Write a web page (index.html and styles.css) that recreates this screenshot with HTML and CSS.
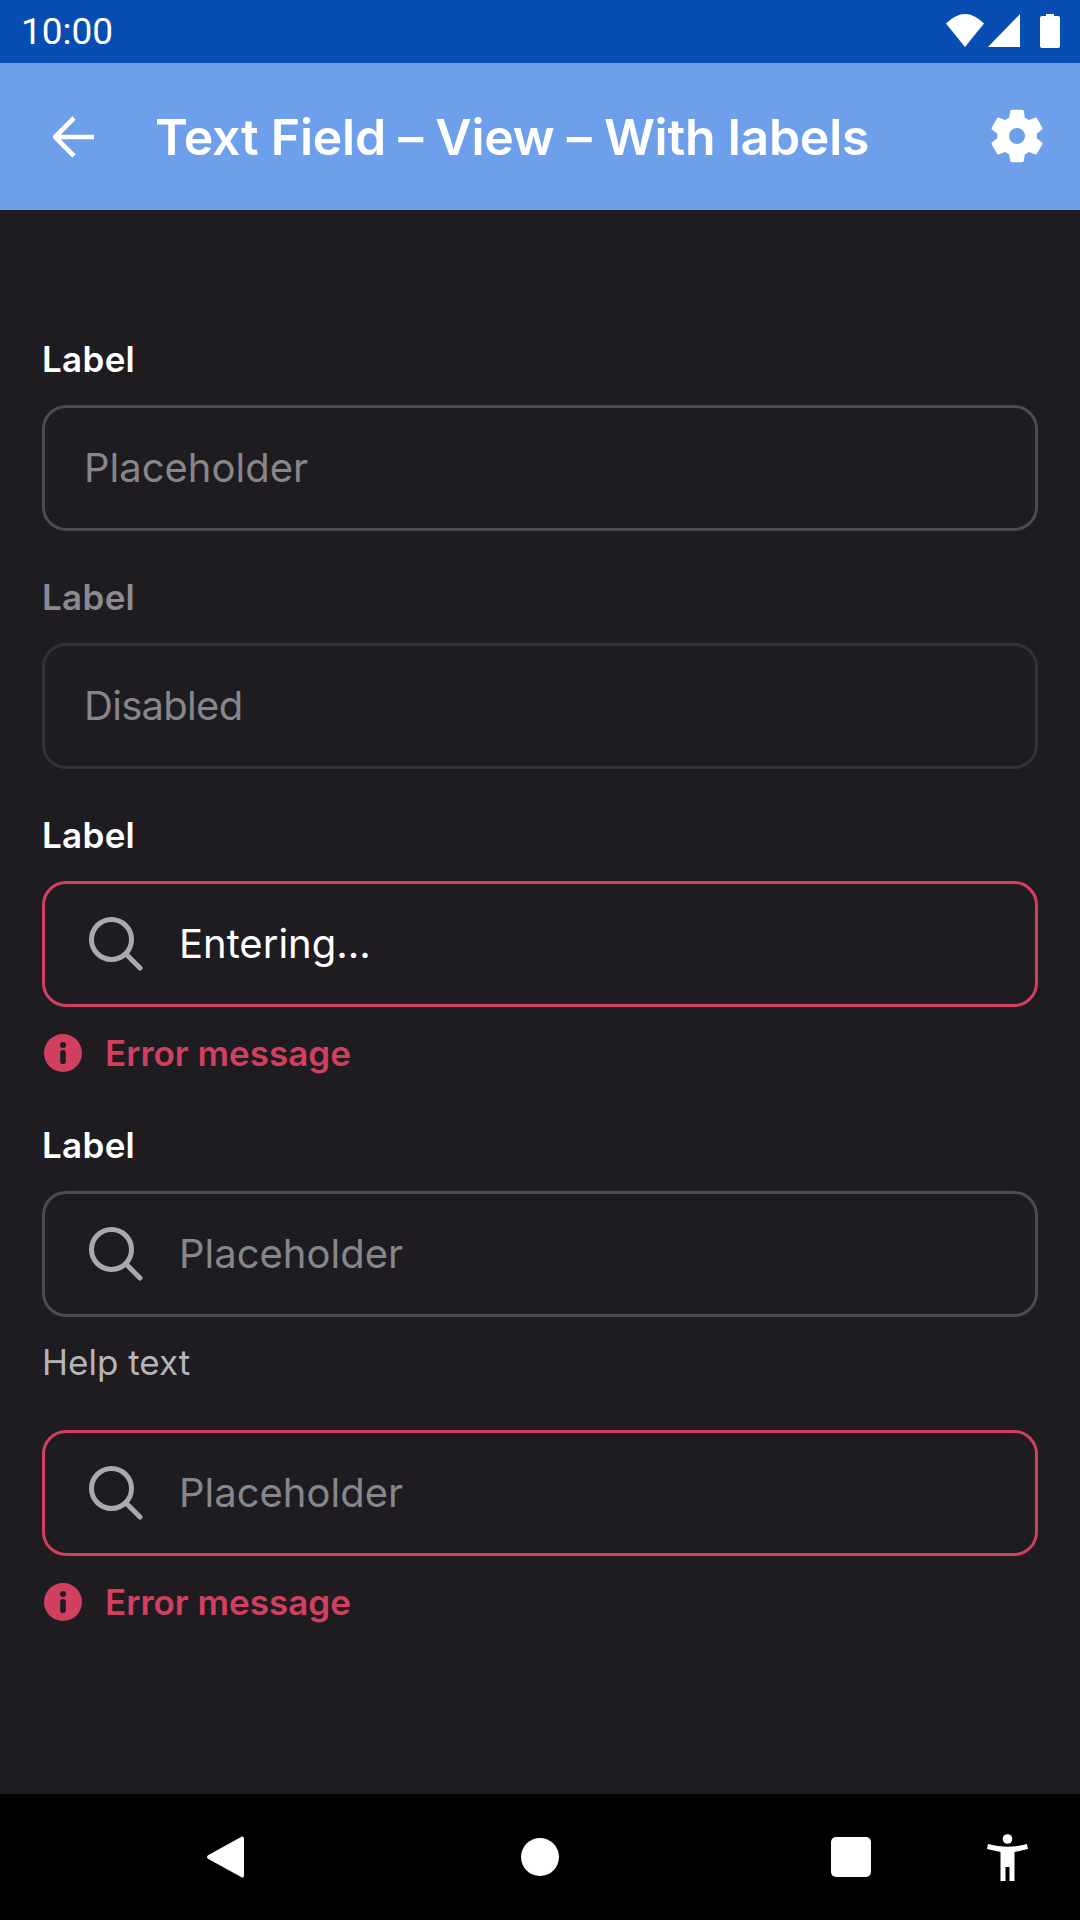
FILE: index.html
```html
<!DOCTYPE html>
<html lang="en">
<head>
<meta charset="utf-8">
<title>Text Field</title>
<link rel="stylesheet" href="styles.css">
</head>
<body>
<div class="screen">
  <header class="status">
    <span class="time">10:00</span>
    <div class="status-icons">
      <svg class="ic-wifi" viewBox="0 0 38 33"><path d="M0 9.5 Q19 -9.5 38 9.5 L19 33 Z"/></svg>
      <svg class="ic-signal" viewBox="0 0 32 33"><path d="M32 0 V33 H0 Z"/></svg>
      <svg class="ic-battery" viewBox="0 0 20 34"><path d="M6 0 H14 V2 H18 Q20 2 20 4 V32 Q20 34 18 34 H2 Q0 34 0 32 V4 Q0 2 2 2 H6 Z"/></svg>
    </div>
  </header>
  <div class="appbar">
    <svg class="ic-back" viewBox="0 0 42 42"><path d="M41 21 H3 M21 2 L2 21 L21 40" fill="none" stroke="#fff" stroke-width="4.6"/></svg>
    <h1 class="title">Text Field – View – With labels</h1>
    <svg class="ic-gear" viewBox="0 0 24 24"><path d="M19.14 12.94c.04-.3.06-.61.06-.94 0-.32-.02-.64-.07-.94l2.03-1.58a.49.49 0 0 0 .12-.61l-1.92-3.32a.49.49 0 0 0-.59-.22l-2.39.96c-.5-.38-1.03-.7-1.62-.94l-.36-2.54a.48.48 0 0 0-.48-.41h-3.84a.48.48 0 0 0-.47.41l-.36 2.54c-.59.24-1.13.57-1.62.94l-2.39-.96a.49.49 0 0 0-.59.22L2.74 8.87a.48.48 0 0 0 .12.61l2.03 1.58c-.05.3-.09.63-.09.94s.02.64.07.94l-2.03 1.58a.49.49 0 0 0-.12.61l1.92 3.32c.12.22.37.29.59.22l2.39-.96c.5.38 1.03.7 1.62.94l.36 2.54c.05.24.24.41.48.41h3.84c.24 0 .44-.17.47-.41l.36-2.54c.59-.24 1.13-.56 1.62-.94l2.39.96c.22.08.47 0 .59-.22l1.92-3.32c.12-.22.07-.47-.12-.61l-2.01-1.58zM12 15.2c-1.76 0-3.2-1.44-3.2-3.2s1.44-3.2 3.2-3.2 3.2 1.44 3.2 3.2-1.44 3.2-3.2 3.2z"/></svg>
  </div>
  <main class="form">
    <section class="group">
      <label class="label">Label</label>
      <div class="field"><span class="ph">Placeholder</span></div>
    </section>
    <section class="group g2">
      <label class="label muted">Label</label>
      <div class="field disabled"><span class="ph tight">Disabled</span></div>
    </section>
    <section class="group g2">
      <label class="label">Label</label>
      <div class="field error">
        <svg class="ic-search" viewBox="0 0 54 54"><circle cx="22.5" cy="22.5" r="20" fill="none" stroke="#a9a9b3" stroke-width="5"/><path d="M37 37 L51 51" stroke="#a9a9b3" stroke-width="5" stroke-linecap="round"/></svg>
        <span class="value">Entering...</span>
      </div>
      <div class="message">
        <svg class="ic-info" viewBox="0 0 38 38"><circle cx="19" cy="19" r="19" fill="#d1405f"/><circle cx="19" cy="11" r="3" fill="#1e1c21"/><rect x="16.2" y="16" width="5.6" height="14" rx="2.8" fill="#1e1c21"/></svg>
        <span class="err-text">Error message</span>
      </div>
    </section>
    <section class="group g3">
      <label class="label">Label</label>
      <div class="field">
        <svg class="ic-search" viewBox="0 0 54 54"><circle cx="22.5" cy="22.5" r="20" fill="none" stroke="#a9a9b3" stroke-width="5"/><path d="M37 37 L51 51" stroke="#a9a9b3" stroke-width="5" stroke-linecap="round"/></svg>
        <span class="ph">Placeholder</span>
      </div>
      <div class="help">Help text</div>
    </section>
    <section class="group g4">
      <div class="field error">
        <svg class="ic-search" viewBox="0 0 54 54"><circle cx="22.5" cy="22.5" r="20" fill="none" stroke="#a9a9b3" stroke-width="5"/><path d="M37 37 L51 51" stroke="#a9a9b3" stroke-width="5" stroke-linecap="round"/></svg>
        <span class="ph">Placeholder</span>
      </div>
      <div class="message">
        <svg class="ic-info" viewBox="0 0 38 38"><circle cx="19" cy="19" r="19" fill="#d1405f"/><circle cx="19" cy="11" r="3" fill="#1e1c21"/><rect x="16.2" y="16" width="5.6" height="14" rx="2.8" fill="#1e1c21"/></svg>
        <span class="err-text">Error message</span>
      </div>
    </section>
  </main>
  <nav class="navbar">
    <svg class="nav-back" viewBox="0 0 37 42"><path d="M34.5 .8 Q37 -.5 37 3 V39 Q37 42.5 34.5 41.2 L1 22.8 Q-1 21 1 19.2 Z"/></svg>
    <span class="nav-home"></span>
    <span class="nav-recent"></span>
    <svg class="nav-a11y" viewBox="0 0 41 47"><circle cx="20.5" cy="5" r="4.8"/><path d="M1 10 Q20.5 15.5 40 10 L41 15 L27.5 18 V47 H22.5 V33 H18.5 V47 H13.5 V18 L0 15 Z"/></svg>
  </nav>
</div>
</body>
</html>
```
FILE: styles.css
```css
* { box-sizing: border-box; }
html, body { margin: 0; padding: 0; }
body { background: #1e1c21; font-family: Inter, "Noto Sans", sans-serif; }
.screen { width: 1080px; height: 1920px; display: flex; flex-direction: column; overflow: hidden; }
.status { height: 63px; background: #084eb2; display: flex; align-items: center; justify-content: space-between; padding: 0 20px 0 21px; color: #fff; }
.time { font-family: Roboto, sans-serif; font-size: 37px; line-height: 63px; }
.status-icons { display: flex; align-items: flex-start; margin-bottom: 1px; }
.status-icons svg { fill: #fff; display: block; }
.ic-wifi { width: 38px; height: 33px; margin-right: 4px; }
.ic-signal { width: 32px; height: 33px; margin-right: 20px; }
.ic-battery { width: 20px; height: 34px; }
.appbar { height: 147px; background: #6e9fea; display: flex; align-items: center; padding: 0 31px 0 53px; }
.ic-back { width: 42px; height: 42px; flex: none; }
.title { flex: 1; margin: 0 0 0 60px; font-size: 50px; font-weight: 600; letter-spacing: -.26px; color: #fff; line-height: 1; white-space: nowrap; }
.ic-gear { width: 64px; height: 64px; fill: #fff; stroke: #fff; stroke-width: .4; stroke-linejoin: round; flex: none; margin-bottom: 2px; }
.form { flex: 1; padding: 130px 42px 0; display: flex; flex-direction: column; }
.group { display: flex; flex-direction: column; }
.g2 { margin-top: 47px; }
.g3 { margin-top: 54px; }
.g4 { margin-top: 49px; }
.label { font-size: 35px; font-weight: 600; letter-spacing: .3px; line-height: 38px; color: #fff; margin-bottom: 27px; }
.label.muted { color: #8b8a90; }
.field { height: 126px; border: 3px solid #4c4b50; border-radius: 24px; display: flex; align-items: center; padding: 0 39px 2px; font-size: 40px; }
.field.disabled { border-color: #333237; }
.field.error { border-color: #d1405f; }
.ph { color: #87868b; }
.ph.tight { letter-spacing: -.7px; }
.value { color: #fff; }
.ic-search { width: 54px; height: 54px; margin: 2px 36px 0 5px; flex: none; }
.message { display: flex; align-items: center; margin-top: 27px; }
.ic-info { width: 38px; height: 38px; margin: 0 23px 0 2px; flex: none; }
.err-text { color: #d1405f; font-size: 35px; font-weight: 600; line-height: 38px; }
.help { margin-top: 26px; font-size: 35px; line-height: 38px; color: #b5b4ba; }
.navbar { height: 126px; background: #000; display: flex; align-items: center; }
.navbar svg { fill: #fff; display: block; }
.nav-back { width: 37px; height: 42px; margin-left: 207px; }
.nav-home { width: 38px; height: 38px; border-radius: 50%; background: #fff; margin-left: 277px; }
.nav-recent { width: 40px; height: 40px; border-radius: 5px; background: #fff; margin-left: 272px; }
.nav-a11y { width: 41px; height: 47px; margin-left: 116px; }
```
